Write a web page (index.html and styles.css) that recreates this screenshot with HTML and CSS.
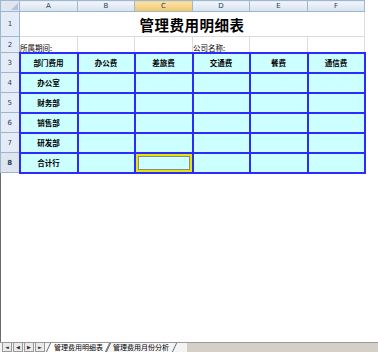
FILE: index.html
```html
<!DOCTYPE html>
<html lang="zh-CN">
<head>
    <meta charset="UTF-8">
    <title>管理费用明细表</title>
    <link rel="stylesheet" href="styles.css">
</head>
<body>
    <div class="sheet">
        <table class="grid">
            <colgroup>
                <col class="c-row"><col class="c-a"><col class="c-b"><col class="c-c"><col class="c-d"><col class="c-e"><col class="c-f">
            </colgroup>
            <tr class="r-head">
                <th class="corner"><span class="grip"></span></th>
                <th class="col">A</th><th class="col">B</th><th class="col sel">C</th>
                <th class="col">D</th><th class="col">E</th><th class="col">F</th>
            </tr>
            <tr class="r1">
                <th class="row">1</th>
                <td colspan="6" class="title">管理费用明细表</td>
            </tr>
            <tr class="r2">
                <th class="row">2</th>
                <td class="note">所属期间:</td><td></td><td></td>
                <td class="note">公司名称:</td><td></td><td></td>
            </tr>
            <tr class="r3 data">
                <th class="row">3</th>
                <td class="hd">部门费用</td><td class="hd">办公费</td><td class="hd">差旅费</td>
                <td class="hd">交通费</td><td class="hd">餐费</td><td class="hd">通信费</td>
            </tr>
            <tr class="data">
                <th class="row">4</th>
                <td class="hd">办公室</td><td></td><td></td><td></td><td></td><td></td>
            </tr>
            <tr class="data">
                <th class="row">5</th>
                <td class="hd">财务部</td><td></td><td></td><td></td><td></td><td></td>
            </tr>
            <tr class="data">
                <th class="row">6</th>
                <td class="hd">销售部</td><td></td><td></td><td></td><td></td><td></td>
            </tr>
            <tr class="data">
                <th class="row">7</th>
                <td class="hd">研发部</td><td></td><td></td><td></td><td></td><td></td>
            </tr>
            <tr class="data">
                <th class="row sel">8</th>
                <td class="hd">合计行</td><td></td><td class="active"></td><td></td><td></td><td></td>
            </tr>
        </table>
    </div>

    <div class="tabbar">
        <div class="nav">
            <span class="btn">&#9668;</span><span class="btn">&#9664;</span><span class="btn">&#9654;</span><span class="btn">&#9658;</span>
        </div>
        <div class="tab on"><span>管理费用明细表</span></div>
        <div class="tab"><span>管理费用月份分析</span></div>
        <div class="rest"></div>
    </div>
</body>
</html>
```

FILE: styles.css
```css
body {
    margin: 0;
    width: 378px;
    height: 352px;
    overflow: hidden;
    background: #fff;
    font-family: "Noto Sans CJK SC", "DejaVu Sans", sans-serif;
}

.sheet {
    height: 342px;
    border-left: 1px solid #6d6d6d;
    box-sizing: border-box;
}

.grid {
    border-collapse: collapse;
    table-layout: fixed;
    width: 364px;
    margin-left: -1px;
}

.c-row { width: 19px; }
.c-a { width: 58px; }
.c-b { width: 57px; }
.c-c { width: 58px; }
.c-d { width: 57px; }
.c-e { width: 58px; }
.c-f { width: 57px; }

.grid td,
.grid th {
    padding: 0;
    border: 1px solid #dcdcdc;
    overflow: hidden;
    white-space: nowrap;
}

.r-head { height: 11px; }
.r1 { height: 25px; }
.r2 { height: 16px; }
.data { height: 20px; }

.corner {
    background: #dfe6f1;
    border-color: #9eb6ce !important;
    position: relative;
}

.grip {
    position: absolute;
    right: 1px;
    bottom: 1px;
    width: 0;
    height: 0;
    border-left: 7px solid transparent;
    border-bottom: 7px solid #b5c2d3;
}

.col {
    background: linear-gradient(#f2f6fb, #d6e1ef);
    border-color: #9eb6ce !important;
    font: 7px "DejaVu Sans", sans-serif;
    color: #27415f;
    line-height: 9px;
}

.col.sel {
    background: linear-gradient(#f8e3b0, #f2c767);
}

.row {
    background: #e4ecf7;
    border-color: #9eb6ce !important;
    font: 7px "DejaVu Sans", sans-serif;
    color: #27415f;
    font-weight: normal;
}

.row.sel {
    background: #dde5f0;
    font-weight: bold;
}

.title {
    text-align: center;
    font-size: 14.5px;
    font-weight: bold;
    color: #000;
    letter-spacing: 0.5px;
}

.note {
    font-size: 7.5px;
    vertical-align: bottom;
    color: #000;
    line-height: 9px;
}

.grid .data td {
    background: #ccffff;
    border: 2px solid #2b2bff;
}

.grid .data td.hd {
    text-align: center;
    font-size: 7.5px;
    font-weight: bold;
    color: #000;
}

.grid .data td.active {
    box-shadow: inset 0 0 0 2px #e6e600, inset 0 0 0 3px #8a8a8a;
}

.tabbar {
    height: 10px;
    display: flex;
    align-items: stretch;
    border-top: 1px solid #9a9a9a;
    background: #f4f4f4;
    box-sizing: border-box;
    font-size: 7px;
    line-height: 9px;
}

.nav {
    display: flex;
    gap: 1px;
    padding: 0 3px 0 2px;
}

.btn {
    width: 8px;
    font: 5px "DejaVu Sans", sans-serif;
    line-height: 8px;
    text-align: center;
    color: #333;
    border: 1px solid #9a9a9a;
    border-top: 0;
    background: #eaeaea;
}

.tab {
    padding: 0 5px;
    color: #000;
    border-left: 1px solid #6a6a6a;
    border-right: 1px solid #6a6a6a;
    transform: skewX(-25deg);
    margin-right: -2px;
}

.tab span {
    display: block;
    transform: skewX(25deg);
}

.tab.on {
    background: #fff;
}

.rest {
    flex: 1;
    margin-left: 14px;
    background: #d4d0c8;
}
```
